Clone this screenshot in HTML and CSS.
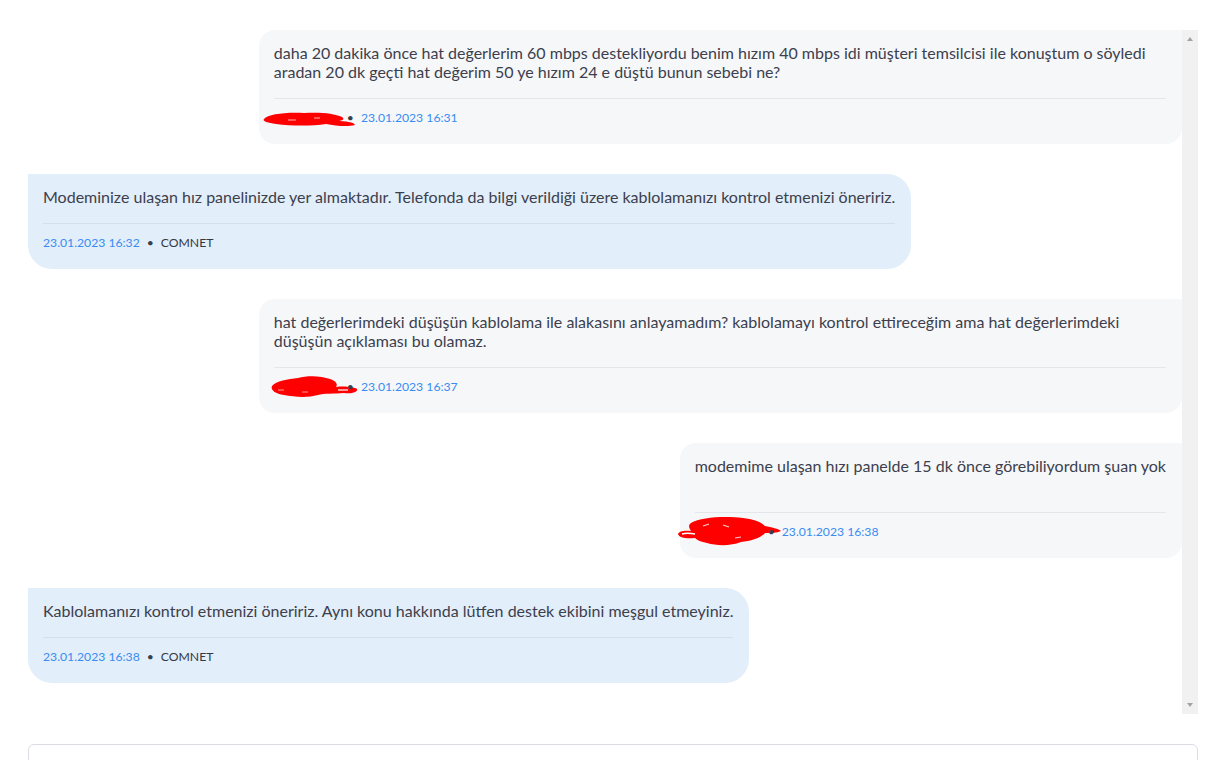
FILE: index.html
```html
<!DOCTYPE html>
<html lang="tr">
<head>
<meta charset="utf-8">
<title>Destek Talebi</title>
<link rel="stylesheet" href="styles.css">
</head>
<body>
<div class="page">
  <div class="chat">
    <div class="messages">
      <div class="bubble out">
        <div class="text">daha 20 dakika önce hat değerlerim 60 mbps destekliyordu benim hızım 40 mbps idi müşteri temsilcisi ile konuştum o söyledi aradan 20 dk geçti hat değerim 50 ye hızım 24 e düştü bunun sebebi ne?</div>
        <div class="meta">
          <svg class="redact" width="66" height="18" viewBox="0 0 66 18" aria-hidden="true">
            <path d="M-10,10 C-6,5 12,3 30,4 C45,3 60,4 68,8 C71,10 69,12 62,12 C72,12 80,13 81,16 C74,18 62,17 52,15 C38,17 18,17 2,15 C-6,14 -12,12 -10,10 Z" fill="#ff0000"/>
            <path d="M14,11 L22,11 M40,9 L46,9" stroke="#fff" stroke-width="1" opacity="0.7"/>
          </svg>
          <span class="sep">•</span>
          <span class="date">23.01.2023 16:31</span>
        </div>
      </div>

      <div class="bubble in">
        <div class="text">Modeminize ulaşan hız panelinizde yer almaktadır. Telefonda da bilgi verildiği üzere kablolamanızı kontrol etmenizi öneririz.</div>
        <div class="meta">
          <span class="date">23.01.2023 16:32</span>
          <span class="sep">•</span>
          <span class="author">COMNET</span>
        </div>
      </div>

      <div class="bubble out">
        <div class="text">hat değerlerimdeki düşüşün kablolama ile alakasını anlayamadım? kablolamayı kontrol ettireceğim ama hat değerlerimdeki düşüşün açıklaması bu olamaz.</div>
        <div class="meta">
          <svg class="redact" width="66" height="18" viewBox="0 0 66 18" aria-hidden="true">
            <path d="M-2,8 C2,3 14,1 24,0 C34,-3 48,-2 56,1 C62,3 64,6 62,9 C70,8 80,9 83,11 C84,14 78,16 70,15 C60,16 50,15 44,17 C34,20 20,19 10,17 C2,16 -4,12 -2,8 Z" fill="#ff0000"/>
            <path d="M64,12 L74,12" stroke="#fff" stroke-width="1.2"/>
            <path d="M4,12 L10,12 M28,14 L34,14" stroke="#fff" stroke-width="1" opacity="0.6"/>
          </svg>
          <span class="sep">•</span>
          <span class="date">23.01.2023 16:37</span>
        </div>
      </div>

      <div class="bubble out tall">
        <div class="text">modemime ulaşan hızı panelde 15 dk önce görebiliyordum şuan yok<br><br></div>
        <div class="meta">
          <svg class="redact" width="66" height="18" viewBox="0 0 66 18" aria-hidden="true">
            <path d="M-4,0 C6,-6 30,-7 48,-5 C58,-4 66,-1 70,3 C76,4 84,6 86,8 C82,10 76,10 70,10 C66,15 56,18 46,19 C36,23 22,23 12,20 C6,19 2,17 0,15 C-8,16 -16,15 -17,11 C-16,8 -10,7 -4,8 C-6,5 -7,2 -4,0 Z" fill="#ff0000"/>
            <path d="M-13,11 C-10,10 -5,10 0,11" stroke="#fff" stroke-width="1.5" fill="none"/>
            <path d="M8,3 L14,1 M28,2 L34,4 M40,15 L46,14" stroke="#fff" stroke-width="1.2" opacity="0.8"/>
          </svg>
          <span class="sep">•</span>
          <span class="date">23.01.2023 16:38</span>
        </div>
      </div>

      <div class="bubble in">
        <div class="text">Kablolamanızı kontrol etmenizi öneririz. Aynı konu hakkında lütfen destek ekibini meşgul etmeyiniz.</div>
        <div class="meta">
          <span class="date">23.01.2023 16:38</span>
          <span class="sep">•</span>
          <span class="author">COMNET</span>
        </div>
      </div>
    </div>
    <div class="scrollbar" aria-hidden="true">
      <span class="arrow up"></span>
      <span class="arrow down"></span>
    </div>
  </div>
  <div class="composer"></div>
</div>
</body>
</html>
```

FILE: styles.css
```css
html, body {
  margin: 0;
  padding: 0;
  background: #ffffff;
  height: 100%;
  overflow: hidden;
}

body {
  font-family: Lato, "Open Sans", Arial, sans-serif;
  color: #3c404d;
}

.page {
  padding: 30px 16px 0 28px;
}

.chat {
  display: flex;
  height: 684px;
}

.messages {
  flex: 1;
  display: flex;
  flex-direction: column;
  gap: 30px;
  overflow: hidden;
}

.bubble {
  max-width: 80%;
  box-sizing: border-box;
  padding: 13px 16px 17px 15px;
}

.bubble.out {
  align-self: flex-end;
  background: #f6f7f9;
  border-radius: 16px 0 16px 16px;
}

.bubble.tall .meta {
  margin-top: 18px;
}

.bubble.in {
  align-self: flex-start;
  background: #e2eef9;
  border-radius: 0 24px 24px 24px;
}

.text {
  font-size: 16px;
  line-height: 19px;
  color: #3c404d;
}

.meta {
  margin-top: 17px;
  border-top: 1px solid #e3e6ea;
  padding-top: 10px;
  font-size: 12.2px;
  line-height: 18px;
  display: flex;
  align-items: center;
}

.bubble.in .meta {
  border-top-color: #d3e0ec;
}

.date {
  color: #3a8cf2;
}

.author {
  color: #333845;
  text-transform: uppercase;
}

.sep {
  color: #3a3f4c;
  margin: 0 7px;
}

.redact {
  overflow: visible;
  display: block;
}

.scrollbar {
  width: 16px;
  background: #f1f1f1;
  display: flex;
  flex-direction: column;
  justify-content: space-between;
  align-items: center;
  padding: 7px 0;
  box-sizing: border-box;
}

.arrow {
  width: 0;
  height: 0;
  border-left: 3.5px solid transparent;
  border-right: 3.5px solid transparent;
}

.arrow.up {
  border-bottom: 4px solid #a3a3a3;
}

.arrow.down {
  border-top: 4px solid #a3a3a3;
}

.composer {
  margin-top: 30px;
  height: 40px;
  border: 1px solid #dcdde2;
  border-radius: 6px;
  background: #fff;
}
```
